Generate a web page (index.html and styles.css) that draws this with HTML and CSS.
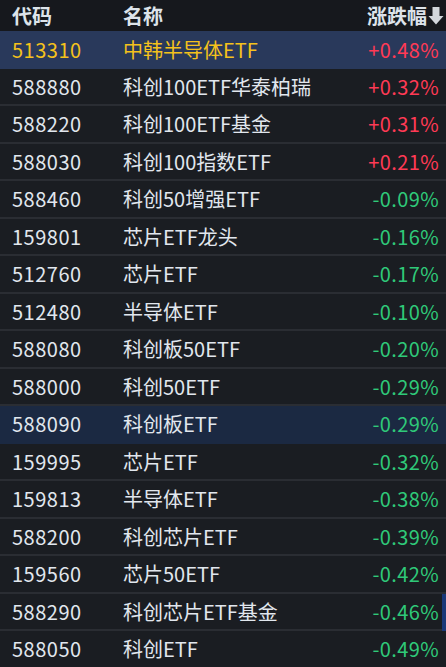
FILE: index.html
```html
<!DOCTYPE html>
<html lang="zh-CN">

<head>
    <meta charset="UTF-8">
    <meta name="viewport" content="width=device-width, initial-scale=1.0">
    <title>ETF 涨跌幅</title>
    <link rel="stylesheet" href="styles.css">
</head>

<body>
    <div class="quote-list">
        <div class="row header">
            <span class="code">代码</span>
            <span class="name">名称</span>
            <span class="change">涨跌幅<svg class="sort-icon" width="16" height="18" viewBox="0 0 16 18">
                    <path d="M4.5 0 H11.5 V9 H15.5 L8 17.5 L0.5 9 H4.5 Z" fill="#d3d7dc" />
                </svg></span>
        </div>
        <div class="row selected">
            <span class="code">513310</span>
            <span class="name">中韩半导体ETF</span>
            <span class="change up">+0.48%</span>
        </div>
        <div class="row">
            <span class="code">588880</span>
            <span class="name">科创100ETF华泰柏瑞</span>
            <span class="change up">+0.32%</span>
        </div>
        <div class="row">
            <span class="code">588220</span>
            <span class="name">科创100ETF基金</span>
            <span class="change up">+0.31%</span>
        </div>
        <div class="row">
            <span class="code">588030</span>
            <span class="name">科创100指数ETF</span>
            <span class="change up">+0.21%</span>
        </div>
        <div class="row">
            <span class="code">588460</span>
            <span class="name">科创50增强ETF</span>
            <span class="change down">-0.09%</span>
        </div>
        <div class="row">
            <span class="code">159801</span>
            <span class="name">芯片ETF龙头</span>
            <span class="change down">-0.16%</span>
        </div>
        <div class="row">
            <span class="code">512760</span>
            <span class="name">芯片ETF</span>
            <span class="change down">-0.17%</span>
        </div>
        <div class="row">
            <span class="code">512480</span>
            <span class="name">半导体ETF</span>
            <span class="change down">-0.10%</span>
        </div>
        <div class="row">
            <span class="code">588080</span>
            <span class="name">科创板50ETF</span>
            <span class="change down">-0.20%</span>
        </div>
        <div class="row">
            <span class="code">588000</span>
            <span class="name">科创50ETF</span>
            <span class="change down">-0.29%</span>
        </div>
        <div class="row hover">
            <span class="code">588090</span>
            <span class="name">科创板ETF</span>
            <span class="change down">-0.29%</span>
        </div>
        <div class="row">
            <span class="code">159995</span>
            <span class="name">芯片ETF</span>
            <span class="change down">-0.32%</span>
        </div>
        <div class="row">
            <span class="code">159813</span>
            <span class="name">半导体ETF</span>
            <span class="change down">-0.38%</span>
        </div>
        <div class="row">
            <span class="code">588200</span>
            <span class="name">科创芯片ETF</span>
            <span class="change down">-0.39%</span>
        </div>
        <div class="row">
            <span class="code">159560</span>
            <span class="name">芯片50ETF</span>
            <span class="change down">-0.42%</span>
        </div>
        <div class="row marked">
            <span class="code">588290</span>
            <span class="name">科创芯片ETF基金</span>
            <span class="change down">-0.46%</span>
        </div>
        <div class="row">
            <span class="code">588050</span>
            <span class="name">科创ETF</span>
            <span class="change down">-0.49%</span>
        </div>
    </div>
</body>

</html>
```

FILE: styles.css
```css
body {
    margin: 0;
    padding: 0;
    background-color: #1a1d22;
    /* Dark terminal background */
    color: #e1e7ee;
    font-family: "Noto Sans CJK SC", "Noto Sans", sans-serif;
    font-size: 20px;
    overflow: hidden;
}

.quote-list {
    width: 446px;
}

.row {
    display: grid;
    grid-template-columns: 111px 1fr auto;
    align-items: center;
    height: 37.5px;
    padding: 0 7px 0 12px;
    box-sizing: border-box;
    border-bottom: 2px solid #2a2d33;
    /* Row separator */
    position: relative;
    white-space: nowrap;
}

.row.header {
    height: 31px;
    background-color: #16181d;
    border-bottom: none;
    font-weight: bold;
    color: #dde3ea;
    padding-right: 2px;
}

.row.selected {
    background-color: #29395b;
    /* Selected row blue */
    color: #f5c21b;
    border-bottom: none;
}

.row.hover {
    background-color: #1b2942;
    border-bottom-color: #1b2942;
}

.row.marked::after {
    content: "";
    position: absolute;
    right: 0;
    top: 0;
    bottom: -2px;
    width: 4px;
    background-color: #1a3878;
    /* Scroll marker */
}

.row:not(.header) .code {
    letter-spacing: 0.5px;
}

.change {
    text-align: right;
    display: flex;
    align-items: center;
}

.row:not(.header) .change {
    letter-spacing: 0.4px;
}

.sort-icon {
    margin-left: 1px;
    margin-top: 1px;
}

.change.up {
    color: #ff3a55;
    /* Red = rise */
}

.change.down {
    color: #2fc979;
    /* Green = fall */
}
```
